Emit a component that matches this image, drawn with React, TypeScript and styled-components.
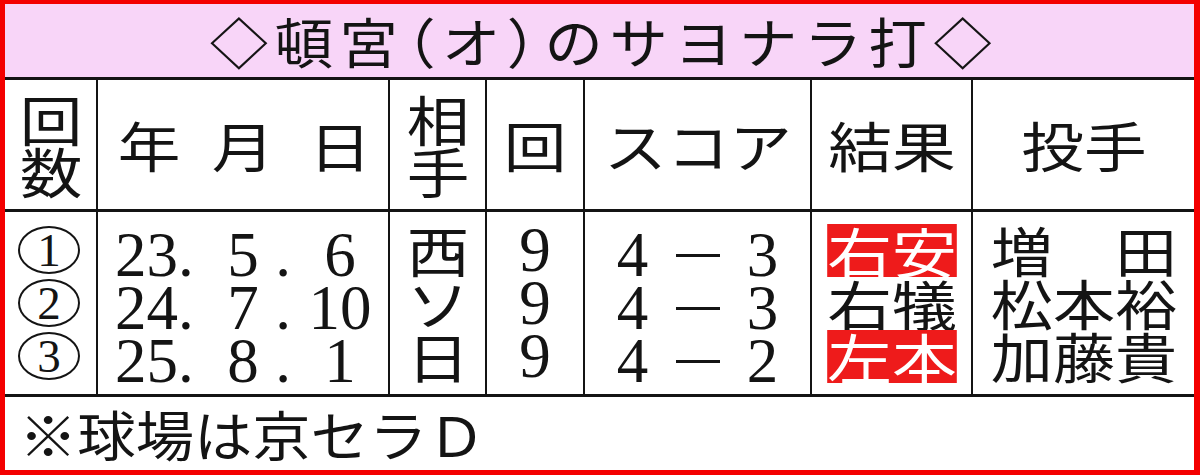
import React from 'react';
import styled, {createGlobalStyle} from 'styled-components';

const JP = `"Noto Sans CJK JP", "Noto Sans", sans-serif`;
const SERIF = `"Liberation Serif", "Noto Sans CJK JP", serif`;
const INK = '#141414';
const LINE = 53;

const GlobalStyle = createGlobalStyle`
  html, body {
    margin: 0;
    padding: 0;
    background: #fff;
  }
  body {
    font-family: ${JP};
    color: ${INK};
  }
`;

const Frame = styled.div`
  box-sizing: border-box;
  width: 1200px;
  height: 475px;
  border-style: solid;
  border-color: #f40000;
  border-width: 4px 6px 5px 5px;
  display: grid;
  grid-template-rows: 73px 320px 73px;
  background: #fff;
`;

const Title = styled.div`
  background: #f8d5f8;
  display: flex;
  align-items: center;
  justify-content: center;
  font-size: 54px;
  padding-left: 8px;
`;

// fullwidth bracket with its empty half cut away
const Paren = styled.span<{$side: 'open' | 'close'}>`
  ${p => (p.$side === 'open' ? 'margin-left: -25px;' : 'margin-right: -25px;')}
`;

const Table = styled.div`
  display: grid;
  grid-template-columns: 91px 290px 95px 96px 225px 159px 221px;
  grid-template-rows: 129px 182px;
  gap: 3px 2px;
  background: ${INK};
  border-top: 3px solid ${INK};
  border-bottom: 3px solid ${INK};
`;

const Cell = styled.div`
  background: #fff;
  display: flex;
  align-items: center;
  justify-content: center;
  font-size: 54px;
  min-width: 0;
`;

const Stack = styled.div`
  display: flex;
  flex-direction: column;
  width: 100%;
`;

const Line = styled.div<{$h: number}>`
  height: ${p => p.$h}px;
  display: flex;
  align-items: center;
  justify-content: center;
`;

const Wide = styled.span<{$sx?: number; $origin?: string; $track?: number}>`
  display: inline-block;
  line-height: 0.96;
  white-space: pre;
  letter-spacing: ${p => p.$track ?? 0}px;
  transform: scaleX(${p => p.$sx ?? 1.16});
  transform-origin: ${p => p.$origin ?? 'center'};
`;

const Mark = styled(Wide)<{$on: boolean}>`
  line-height: ${LINE}px;
  background: ${p => (p.$on ? '#ee1b1b' : 'transparent')};
  color: ${p => (p.$on ? '#fff' : INK)};
`;

const Num = styled.span`
  font-family: ${SERIF};
  font-size: 63px;
  line-height: 1;
`;

const Circled = styled.span`
  box-sizing: border-box;
  width: 62px;
  height: 48px;
  border: 2px solid ${INK};
  border-radius: 50%;
  display: inline-flex;
  align-items: center;
  justify-content: center;
  font-family: ${SERIF};
  font-size: 47px;
  line-height: 1;
  margin-right: 3px;
`;

const Dash = styled.span`
  display: inline-block;
  width: 44px;
  height: 3px;
  background: ${INK};
`;

const DateRow = styled.div<{$h: number}>`
  height: ${p => p.$h}px;
  display: grid;
  grid-template-columns: 124px 42px 38px 76px;
  align-items: center;
  justify-items: center;

  & > :first-child {
    justify-self: start;
    padding-left: 17px;
  }
`;

const ScoreRow = styled.div`
  height: ${LINE}px;
  display: grid;
  grid-template-columns: repeat(3, 65px);
  justify-content: center;
  justify-items: center;
  align-items: center;
`;

const Footer = styled.div`
  display: flex;
  align-items: center;
  padding-left: 14px;
  font-size: 54px;
`;

type Hit = {
    no: string
    year: string
    month: string
    day: string
    opp: string
    inning: string
    score: [string, string]
    result: string
    highlight: boolean
    pitcher: string
}

const hits: Hit[] = [
    {no: '1', year: '23.', month: '5', day: '6', opp: '西', inning: '9', score: ['4', '3'], result: '右安', highlight: true, pitcher: '増\u3000田'},
    {no: '2', year: '24.', month: '7', day: '10', opp: 'ソ', inning: '9', score: ['4', '3'], result: '右犠', highlight: false, pitcher: '松本裕'},
    {no: '3', year: '25.', month: '8', day: '1', opp: '日', inning: '9', score: ['4', '2'], result: '左本', highlight: true, pitcher: '加藤貴'},
];

const Stacked = ({chars}: {chars: string[]}) => (
    <Stack>
        {chars.map((c, i) => (
            <Line key={i} $h={52}><Wide>{c}</Wide></Line>
        ))}
    </Stack>
);

const App = () => {
    return (
        <>
            <GlobalStyle/>
            <Frame>
                <Title>
                    <Wide $sx={1.08} $track={6}>
                        ◇頓宮<Paren $side="open">（</Paren>オ<Paren $side="close">）</Paren>のサヨナラ打◇
                    </Wide>
                </Title>

                <Table>
                    {/* header */}
                    <Cell><Stacked chars={['回', '数']}/></Cell>
                    <Cell>
                        <Stack>
                            <DateRow $h={52}>
                                <Wide $origin="left">年</Wide>
                                <Wide>月</Wide>
                                <span/>
                                <Wide>日</Wide>
                            </DateRow>
                        </Stack>
                    </Cell>
                    <Cell><Stacked chars={['相', '手']}/></Cell>
                    <Cell><Wide>回</Wide></Cell>
                    <Cell><Wide>スコア</Wide></Cell>
                    <Cell><Wide $sx={1.18}>結果</Wide></Cell>
                    <Cell><Wide>投手</Wide></Cell>

                    {/* data */}
                    <Cell>
                        <Stack>
                            {hits.map(h => <Line key={h.no} $h={LINE}><Circled>{h.no}</Circled></Line>)}
                        </Stack>
                    </Cell>
                    <Cell>
                        <Stack>
                            {hits.map(h => (
                                <DateRow key={h.no} $h={LINE}>
                                    <Num>{h.year}</Num>
                                    <Num>{h.month}</Num>
                                    <Num>.</Num>
                                    <Num>{h.day}</Num>
                                </DateRow>
                            ))}
                        </Stack>
                    </Cell>
                    <Cell>
                        <Stack>
                            {hits.map(h => <Line key={h.no} $h={LINE}><Wide>{h.opp}</Wide></Line>)}
                        </Stack>
                    </Cell>
                    <Cell>
                        <Stack>
                            {hits.map(h => <Line key={h.no} $h={LINE}><Num>{h.inning}</Num></Line>)}
                        </Stack>
                    </Cell>
                    <Cell>
                        <Stack>
                            {hits.map(h => (
                                <ScoreRow key={h.no}>
                                    <Num>{h.score[0]}</Num>
                                    <Dash aria-label="－"/>
                                    <Num>{h.score[1]}</Num>
                                </ScoreRow>
                            ))}
                        </Stack>
                    </Cell>
                    <Cell>
                        <Stack>
                            {hits.map(h => (
                                <Line key={h.no} $h={LINE}>
                                    <Mark $sx={1.2} $on={h.highlight}>{h.result}</Mark>
                                </Line>
                            ))}
                        </Stack>
                    </Cell>
                    <Cell>
                        <Stack>
                            {hits.map(h => <Line key={h.no} $h={LINE}><Wide $sx={1.15}>{h.pitcher}</Wide></Line>)}
                        </Stack>
                    </Cell>
                </Table>

                <Footer><Wide $sx={1.08} $origin="left">※球場は京セラＤ</Wide></Footer>
            </Frame>
        </>
    );
}

export default App;
